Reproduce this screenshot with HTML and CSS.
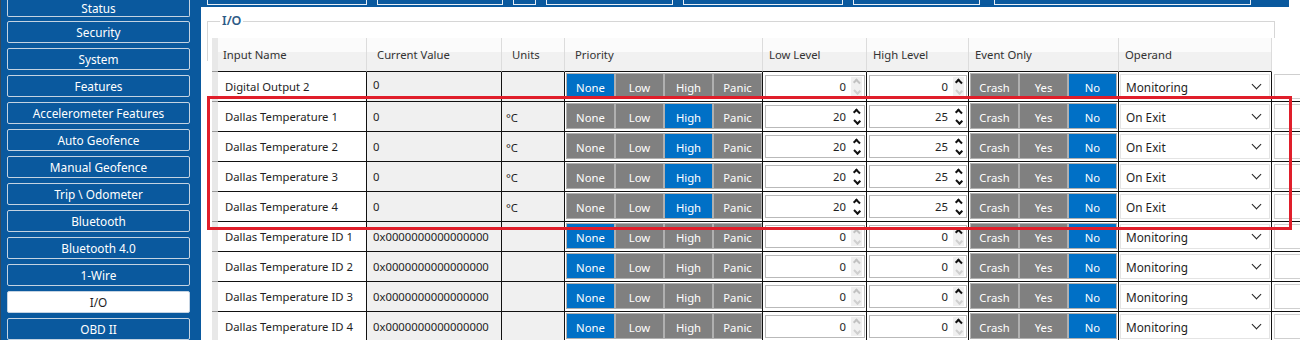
FILE: index.html
```html
<!DOCTYPE html>
<html lang="en">
<head>
    <meta charset="UTF-8">
    <title>I/O</title>
    <link rel="stylesheet" href="styles.css">
</head>
<body>
<div class="window">
    <nav class="sidebar">
        <div class="menu">
            <div class="menu-item first">Status</div>
            <div class="menu-item">Security</div>
            <div class="menu-item">System</div>
            <div class="menu-item">Features</div>
            <div class="menu-item">Accelerometer Features</div>
            <div class="menu-item">Auto Geofence</div>
            <div class="menu-item">Manual Geofence</div>
            <div class="menu-item">Trip \ Odometer</div>
            <div class="menu-item">Bluetooth</div>
            <div class="menu-item">Bluetooth 4.0</div>
            <div class="menu-item">1-Wire</div>
            <div class="menu-item active">I/O</div>
            <div class="menu-item">OBD II</div>
        </div>
    </nav>

    <main class="main">
        <div class="tabstrip">
            <div class="tab w1"></div>
            <div class="tab w2"></div>
            <div class="tab w3"></div>
            <div class="tab w4"></div>
            <div class="tab w5"></div>
            <div class="tab w4"></div>
            <div class="tab w6"></div>
        </div>

        <div class="content">
            <div class="groupbox">
                <span class="group-title">I/O</span>
            </div>

            <div class="table">
                <div class="row head">
                    <div class="cell stub"></div>
                    <div class="cell h-name">Input Name</div>
                    <div class="cell h-pad">Current Value</div>
                    <div class="cell h-pad">Units</div>
                    <div class="cell h-pad">Priority</div>
                    <div class="cell">Low Level</div>
                    <div class="cell">High Level</div>
                    <div class="cell">Event Only</div>
                    <div class="cell">Operand</div>
                    <div class="cell blank"></div>
                </div>

                <div class="row">
                    <div class="cell stub"></div>
                    <div class="cell name">Digital Output 2</div>
                    <div class="cell value up">0</div>
                    <div class="cell units"></div>
                    <div class="cell toggles"><span class="tg on">None</span><span class="tg">Low</span><span class="tg">High</span><span class="tg">Panic</span></div>
                    <div class="cell level"><div class="spin">0<i class="arr off"></i></div></div>
                    <div class="cell level"><div class="spin">0<i class="arr half"></i></div></div>
                    <div class="cell toggles"><span class="tg">Crash</span><span class="tg">Yes</span><span class="tg on">No</span></div>
                    <div class="cell operand"><div class="select">Monitoring</div></div>
                    <div class="cell blank"><div class="box"></div></div>
                </div>

                <div class="row">
                    <div class="cell stub"></div>
                    <div class="cell name">Dallas Temperature 1</div>
                    <div class="cell value">0</div>
                    <div class="cell units">°C</div>
                    <div class="cell toggles"><span class="tg">None</span><span class="tg">Low</span><span class="tg on">High</span><span class="tg">Panic</span></div>
                    <div class="cell level"><div class="spin">20<i class="arr"></i></div></div>
                    <div class="cell level"><div class="spin">25<i class="arr"></i></div></div>
                    <div class="cell toggles"><span class="tg">Crash</span><span class="tg">Yes</span><span class="tg on">No</span></div>
                    <div class="cell operand"><div class="select">On Exit</div></div>
                    <div class="cell blank"><div class="box"></div></div>
                </div>

                <div class="row">
                    <div class="cell stub"></div>
                    <div class="cell name">Dallas Temperature 2</div>
                    <div class="cell value">0</div>
                    <div class="cell units">°C</div>
                    <div class="cell toggles"><span class="tg">None</span><span class="tg">Low</span><span class="tg on">High</span><span class="tg">Panic</span></div>
                    <div class="cell level"><div class="spin">20<i class="arr"></i></div></div>
                    <div class="cell level"><div class="spin">25<i class="arr"></i></div></div>
                    <div class="cell toggles"><span class="tg">Crash</span><span class="tg">Yes</span><span class="tg on">No</span></div>
                    <div class="cell operand"><div class="select">On Exit</div></div>
                    <div class="cell blank"><div class="box"></div></div>
                </div>

                <div class="row">
                    <div class="cell stub"></div>
                    <div class="cell name">Dallas Temperature 3</div>
                    <div class="cell value">0</div>
                    <div class="cell units">°C</div>
                    <div class="cell toggles"><span class="tg">None</span><span class="tg">Low</span><span class="tg on">High</span><span class="tg">Panic</span></div>
                    <div class="cell level"><div class="spin">20<i class="arr"></i></div></div>
                    <div class="cell level"><div class="spin">25<i class="arr"></i></div></div>
                    <div class="cell toggles"><span class="tg">Crash</span><span class="tg">Yes</span><span class="tg on">No</span></div>
                    <div class="cell operand"><div class="select">On Exit</div></div>
                    <div class="cell blank"><div class="box"></div></div>
                </div>

                <div class="row">
                    <div class="cell stub"></div>
                    <div class="cell name">Dallas Temperature 4</div>
                    <div class="cell value">0</div>
                    <div class="cell units">°C</div>
                    <div class="cell toggles"><span class="tg">None</span><span class="tg">Low</span><span class="tg on">High</span><span class="tg">Panic</span></div>
                    <div class="cell level"><div class="spin">20<i class="arr"></i></div></div>
                    <div class="cell level"><div class="spin">25<i class="arr"></i></div></div>
                    <div class="cell toggles"><span class="tg">Crash</span><span class="tg">Yes</span><span class="tg on">No</span></div>
                    <div class="cell operand"><div class="select">On Exit</div></div>
                    <div class="cell blank"><div class="box"></div></div>
                </div>

                <div class="row">
                    <div class="cell stub"></div>
                    <div class="cell name">Dallas Temperature ID 1</div>
                    <div class="cell value">0x0000000000000000</div>
                    <div class="cell units"></div>
                    <div class="cell toggles"><span class="tg on">None</span><span class="tg">Low</span><span class="tg">High</span><span class="tg">Panic</span></div>
                    <div class="cell level"><div class="spin">0<i class="arr off"></i></div></div>
                    <div class="cell level"><div class="spin">0<i class="arr half"></i></div></div>
                    <div class="cell toggles"><span class="tg">Crash</span><span class="tg">Yes</span><span class="tg on">No</span></div>
                    <div class="cell operand"><div class="select">Monitoring</div></div>
                    <div class="cell blank"><div class="box"></div></div>
                </div>

                <div class="row">
                    <div class="cell stub"></div>
                    <div class="cell name">Dallas Temperature ID 2</div>
                    <div class="cell value">0x0000000000000000</div>
                    <div class="cell units"></div>
                    <div class="cell toggles"><span class="tg on">None</span><span class="tg">Low</span><span class="tg">High</span><span class="tg">Panic</span></div>
                    <div class="cell level"><div class="spin">0<i class="arr off"></i></div></div>
                    <div class="cell level"><div class="spin">0<i class="arr half"></i></div></div>
                    <div class="cell toggles"><span class="tg">Crash</span><span class="tg">Yes</span><span class="tg on">No</span></div>
                    <div class="cell operand"><div class="select">Monitoring</div></div>
                    <div class="cell blank"><div class="box"></div></div>
                </div>

                <div class="row">
                    <div class="cell stub"></div>
                    <div class="cell name">Dallas Temperature ID 3</div>
                    <div class="cell value">0x0000000000000000</div>
                    <div class="cell units"></div>
                    <div class="cell toggles"><span class="tg on">None</span><span class="tg">Low</span><span class="tg">High</span><span class="tg">Panic</span></div>
                    <div class="cell level"><div class="spin">0<i class="arr off"></i></div></div>
                    <div class="cell level"><div class="spin">0<i class="arr half"></i></div></div>
                    <div class="cell toggles"><span class="tg">Crash</span><span class="tg">Yes</span><span class="tg on">No</span></div>
                    <div class="cell operand"><div class="select">Monitoring</div></div>
                    <div class="cell blank"><div class="box"></div></div>
                </div>

                <div class="row">
                    <div class="cell stub"></div>
                    <div class="cell name">Dallas Temperature ID 4</div>
                    <div class="cell value">0x0000000000000000</div>
                    <div class="cell units"></div>
                    <div class="cell toggles"><span class="tg on">None</span><span class="tg">Low</span><span class="tg">High</span><span class="tg">Panic</span></div>
                    <div class="cell level"><div class="spin">0<i class="arr off"></i></div></div>
                    <div class="cell level"><div class="spin">0<i class="arr half"></i></div></div>
                    <div class="cell toggles"><span class="tg">Crash</span><span class="tg">Yes</span><span class="tg on">No</span></div>
                    <div class="cell operand"><div class="select">Monitoring</div></div>
                    <div class="cell blank"><div class="box"></div></div>
                </div>
            </div>
        </div>
    </main>

    <!-- annotation drawn over the screenshot -->
    <div class="highlight"></div>
</div>
</body>
</html>
```

FILE: styles.css
```css
body {
    margin: 0;
    background: white;
    font-family: "Noto Sans", "Open Sans", sans-serif;
    font-size: 11.3px;
    color: #1e1e1e;
}

.window {
    width: 1300px;
    height: 340px;
    display: flex;
    overflow: hidden;
    position: relative;
}

/* left menu */
.sidebar {
    width: 201px;
    flex: none;
    background: #0a599e;
    border-left: 1px solid #3a4a5a;
    box-sizing: border-box;
}

.menu {
    display: flex;
    flex-direction: column;
    gap: 5px;
    padding-left: 6px;
}

.menu-item {
    width: 183px;
    height: 22px;
    box-sizing: border-box;
    border: 1px solid #c4d3e2;
    border-radius: 2px;
    color: white;
    font-size: 11.8px;
    display: flex;
    align-items: center;
    justify-content: center;
}

/* first item is scrolled partly out of view */
.menu-item.first {
    height: 17px;
    margin-bottom: -1px;
    border-top: none;
    border-radius: 0 0 2px 2px;
    align-items: flex-start;
}

.menu-item.active {
    background: white;
    color: #1e1e1e;
}

/* main area */
.main {
    flex: 1;
    min-width: 0;
    display: flex;
    flex-direction: column;
}

.tabstrip {
    height: 7px;
    width: 1082px;
    background: #0a599e;
    display: flex;
    gap: 10px;
    padding-left: 6px;
    flex: none;
}

.tab {
    height: 10px;
    margin-top: -5px;
    border: 1px solid #e8eef5;
    box-sizing: border-box;
}

.tab.w1 { width: 160px; }
.tab.w2 { width: 126px; }
.tab.w3 { width: 23px; }
.tab.w4 { width: 127px; }
.tab.w5 { width: 160px; }
.tab.w6 { width: 257px; margin-left: 4px; }

.content {
    flex: 1;
    padding: 14px 0 0 6px;
}

.groupbox {
    width: 1068px;
    height: 40px;
    border: 1px solid #d6d6d6;
    border-bottom: none;
    box-sizing: border-box;
    margin-bottom: -23px;
    padding-left: 12px;
}

.group-title {
    display: inline-block;
    background: white;
    padding: 0 2px;
    margin-top: -10px;
    color: #2c5a86;
    font-size: 12.5px;
    font-weight: 600;
    line-height: 18px;
    vertical-align: top;
}

/* grid table */
.table {
    margin-left: 5px;
    width: 1140px;
}

.row {
    display: grid;
    grid-template-columns: 6px 149px 135px 63px 198px 104px 102px 150px 153px 80px;
    height: 30px;
}

.cell {
    border-right: 1px solid #111;
    border-bottom: 1px solid #111;
    box-sizing: border-box;
    display: flex;
    align-items: center;
    white-space: nowrap;
}

.row.head {
    height: 34px;
    background: linear-gradient(#fbfbfb 0, #fbfbfb 40%, #f1f1f1 40%, #f1f1f1 100%);
}

.row.head .cell {
    border-right: 1px solid #dcdcdc;
    border-bottom: 1px solid #111;
    padding-left: 6px;
    color: #333;
}

.row.head .cell.h-name { padding-left: 5px; }
.row.head .cell.h-pad { padding-left: 10px; }
.row.head .cell.blank { border-right: none; border-bottom: none; background: white; }

.cell.stub,
.row.head .cell.stub {
    background: #e8e8e8;
    border-right: none;
    border-bottom: 1px solid #9a9a9a;
    padding: 0;
}

.cell.name {
    background: white;
    padding-left: 7px;
}

.cell.value {
    background: #f0f0f0;
    padding-left: 6px;
}

.cell.value.up { padding-bottom: 4px; }

.cell.units {
    background: #f0f0f0;
    padding: 2px 0 0 4px;
}

/* button groups */
.cell.toggles {
    align-items: flex-start;
    padding: 1px 0 0 1px;
    background: white;
}

.tg {
    width: 49px;
    height: 26px;
    box-sizing: border-box;
    border: 1px solid #b0b0b0;
    background: #808080;
    color: white;
    display: flex;
    align-items: center;
    justify-content: center;
    padding-top: 2px;
}

.tg.on {
    background: #0070c6;
}

/* numeric inputs */
.cell.level {
    padding: 0 1px 0 2px;
    background: white;
}

.spin {
    width: 100%;
    height: 23px;
    box-sizing: border-box;
    border: 1px solid #b9b9b9;
    display: flex;
    align-items: center;
    justify-content: flex-end;
    gap: 5px;
    padding-right: 2px;
}

.arr {
    width: 11px;
    height: 19px;
    display: flex;
    flex-direction: column;
    align-items: center;
    justify-content: center;
    gap: 4px;
}

.arr::before,
.arr::after {
    content: "";
    width: 4px;
    height: 4px;
    border-left: 2px solid #111;
    border-top: 2px solid #111;
}

.arr::before { transform: rotate(45deg); margin-top: 3px; }
.arr::after { transform: rotate(225deg); margin-bottom: 3px; }

.arr.off,
.arr.half {
    background: #f0f0f0;
}

.arr.off::before { border-color: #c2c2c2; }
.arr.off::after,
.arr.half::after { border-color: #cfcfcf; }

/* operand select */
.cell.operand {
    padding: 0 1px 0 1px;
    background: white;
}

.select {
    width: 100%;
    height: 25px;
    box-sizing: border-box;
    border: 1px solid #e4e4e4;
    display: flex;
    align-items: center;
    justify-content: space-between;
    padding: 0 9px 0 5px;
    font-size: 11.8px;
}

.select::after {
    content: "";
    width: 6px;
    height: 6px;
    border-right: 1.5px solid #222;
    border-bottom: 1.5px solid #222;
    transform: rotate(45deg);
    margin-top: -4px;
}

.cell.blank {
    border-right: none;
    background: white;
    padding-left: 2px;
}

.box {
    width: 100%;
    height: 25px;
    border: 1px solid #cfcfcf;
    box-sizing: border-box;
}

.highlight {
    position: absolute;
    left: 207px;
    top: 96px;
    width: 1085px;
    height: 134px;
    border: 3px solid #e01e2a;
    box-sizing: border-box;
    pointer-events: none;
}
```
